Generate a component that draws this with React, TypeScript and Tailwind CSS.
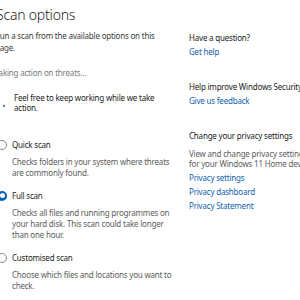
import type React from "react"

const font = { fontFamily: '"Segoe UI", "Noto Sans", "Open Sans", sans-serif' }

const Radio = ({ checked }: { checked?: boolean }) =>
  checked ? (
    <span className="w-[10px] h-[10px] rounded-full bg-[#005fb8] flex items-center justify-center shrink-0">
      <span className="w-[5px] h-[5px] rounded-full bg-white" />
    </span>
  ) : (
    <span className="w-[10px] h-[10px] rounded-full border border-[#8a8a8a] bg-white shrink-0" />
  )

const ScanOption = ({
  label,
  checked,
  children,
}: { label: string; checked?: boolean; children: React.ReactNode }) => (
  <div className="mb-[12px]">
    <div className="flex items-center gap-[5px] h-[11px] pl-[2px]">
      <Radio checked={checked} />
      <span className="text-[#1b1b1b]">{label}</span>
    </div>
    <p className="pl-[17px] mt-[6px] text-[#5c5c5c]">{children}</p>
  </div>
)

const Link = ({ children }: { children: React.ReactNode }) => (
  <div className="text-[#0f5fb0] mt-[3px]">{children}</div>
)

export default function App() {
  return (
    <div
      className="w-[300px] h-[300px] overflow-hidden bg-white text-[8px] leading-[11px] tracking-[-0.2px]"
      style={font}
    >
      <div className="flex ml-[-5px] pt-[6px]">
        <div className="w-[177px] shrink-0">
          <h1 className="text-[14px] leading-[18px] font-light text-[#1b1b1b] ml-[1px]">Scan options</h1>
          <p className="mt-[6px] leading-[12px] text-[#3b3b3b]">
            Run a scan from the available options on this page.
          </p>
          <p className="mt-[13px] text-[#7a7a7a]">Taking action on threats...</p>
          <div className="flex mt-[15px] leading-[10px]">
            <span className="w-[19px] shrink-0 relative">
              <span className="absolute left-[8px] top-[12px] w-[2px] h-[2px] rounded-full bg-[#005fb8]" />
            </span>
            <p className="text-[#1b1b1b]">Feel free to keep working while we take action.</p>
          </div>
          <div className="mt-[26px]">
            <ScanOption label="Quick scan">
              Checks folders in your system where threats are commonly found.
            </ScanOption>
            <ScanOption label="Full scan" checked>
              Checks all files and running programmes on your hard disk. This scan could take longer than one hour.
            </ScanOption>
            <ScanOption label="Customised scan">
              Choose which files and locations you want to check.
            </ScanOption>
          </div>
        </div>
        <div className="ml-[17px] w-[130px] shrink-0 pt-[26px]">
          <div className="text-[#1b1b1b]">Have a question?</div>
          <Link>Get help</Link>
          <div className="text-[#1b1b1b] mt-[24px]">Help improve Windows Security</div>
          <Link>Give us feedback</Link>
          <div className="text-[#1b1b1b] mt-[24px]">Change your privacy settings</div>
          <p className="text-[#5c5c5c] mt-[8px] leading-[10px] whitespace-nowrap">
            View and change privacy settings
            <br />
            for your Windows 11 Home device.
          </p>
          <Link>Privacy settings</Link>
          <Link>Privacy dashboard</Link>
          <Link>Privacy Statement</Link>
        </div>
      </div>
    </div>
  )
}
